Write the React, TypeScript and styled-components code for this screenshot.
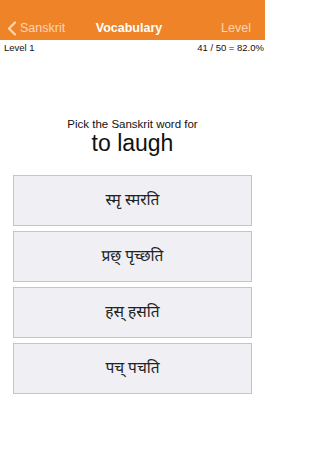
import styled, { createGlobalStyle } from 'styled-components'

const ORANGE = '#ee8328'

const GlobalStyle = createGlobalStyle`
  html, body {
    margin: 0;
    padding: 0;
    background: #fff;
    font-family: 'Liberation Sans', Arial, sans-serif;
  }
`

const CHOICES = ['स्मृ स्मरति', 'प्रछ् पृच्छति', 'हस् हसति', 'पच् पचति']

export default function App() {
  return (
    <>
      <GlobalStyle />
      <Page>
        <Header>
          <NavBar>
            <BackButton>
              <svg width="10" height="15" viewBox="0 0 10 15">
                <path d="M8 1.5 L2 7.5 L8 13.5" fill="none" stroke="#fbd6b3" strokeWidth="2.2" strokeLinecap="round" strokeLinejoin="round" />
              </svg>
              Sanskrit
            </BackButton>
            <Title>Vocabulary</Title>
            <NavAction>Level</NavAction>
          </NavBar>
        </Header>
        <StatusRow>
          <span>Level 1</span>
          <span>41 / 50 = 82.0%</span>
        </StatusRow>
        <Prompt>
          <PromptLine>Pick the Sanskrit word for</PromptLine>
          <PromptWord>to laugh</PromptWord>
        </Prompt>
        <ChoiceList>
          {CHOICES.map((c) => (
            <Choice key={c}>{c}</Choice>
          ))}
        </ChoiceList>
      </Page>
    </>
  )
}

const Page = styled.div`
  width: 265px;
  min-height: 471px;
  display: flex;
  flex-direction: column;
`

const Header = styled.div`
  background: ${ORANGE};
  height: 40px;
  padding-top: 17px;
  box-sizing: border-box;
`

const NavBar = styled.div`
  height: 22px;
  display: grid;
  grid-template-columns: 1fr auto 1fr;
  align-items: center;
  padding: 0 14px 0 7px;
  font-size: 12.5px;
`

const BackButton = styled.div`
  display: flex;
  align-items: center;
  gap: 3px;
  color: #fbd6b3;
`

const Title = styled.div`
  color: #fff;
  font-weight: bold;
`

const NavAction = styled.div`
  color: #fbd6b3;
  text-align: right;
`

const StatusRow = styled.div`
  display: flex;
  justify-content: space-between;
  padding: 2px 1px 0 4px;
  font-size: 9.5px;
  color: #111;
  height: 13px;
`

const Prompt = styled.div`
  margin-top: 62px;
  display: flex;
  flex-direction: column;
  align-items: center;
  color: #111;
`

const PromptLine = styled.div`
  font-size: 11.5px;
  line-height: 14px;
`

const PromptWord = styled.div`
  font-size: 23px;
  line-height: 24px;
`

const ChoiceList = styled.div`
  margin: 20px 13px 0;
  display: flex;
  flex-direction: column;
  gap: 5px;
`

const Choice = styled.div`
  height: 51px;
  box-sizing: border-box;
  background: #efeff4;
  border: 1px solid #f4bb7c;
  display: flex;
  align-items: center;
  justify-content: center;
  font-family: 'Noto Sans Devanagari', 'Noto Serif Devanagari', 'Lohit Devanagari', 'Noto Sans', sans-serif;
  font-size: 15.5px;
  color: #222;
`
